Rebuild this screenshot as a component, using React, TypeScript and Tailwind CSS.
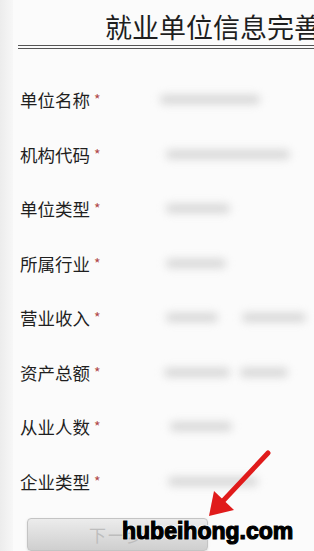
import React from 'react'

const fields: { label: string; bars: [number, number][] }[] = [
  { label: '单位名称', bars: [[0, 100]] },
  { label: '机构代码', bars: [[6, 124]] },
  { label: '单位类型', bars: [[6, 64]] },
  { label: '所属行业', bars: [[6, 60]] },
  { label: '营业收入', bars: [[6, 52], [82, 64]] },
  { label: '资产总额', bars: [[4, 66], [80, 48]] },
  { label: '从业人数', bars: [[10, 62]] },
  { label: '企业类型', bars: [[8, 90]] },
]

const cjk = { fontFamily: '"Noto Sans CJK SC", "Noto Sans", sans-serif' }

export default function App() {
  return (
    <div className="relative flex h-[551px] w-[314px] overflow-hidden bg-[#fbfbfb]" style={cjk}>
      <div className="w-[13px] shrink-0 bg-gradient-to-r from-[#ececec] to-[#f7f7f7]" />
      <div className="flex min-w-0 flex-1 flex-col">
        <div className="whitespace-nowrap pl-[92px] pt-[10px] text-[27px] leading-[34px] text-[#1e1e1e]">
          就业单位信息完善
        </div>
        <div className="ml-[5px] mt-[1px] h-[4px] border-y border-[#555]" />

        <div className="mt-[24px] flex flex-col">
          {fields.map((f) => (
            <div key={f.label} className="flex h-[54.5px] items-center">
              <div className="flex w-[140px] shrink-0 items-start pl-[7px] text-[17.5px] leading-[24px] text-[#1f1f1f]">
                {f.label}
                <span className="ml-[4px] mt-[-1px] text-[14px] text-[#b04848]">*</span>
              </div>
              <div className="relative h-[10px] flex-1">
                {f.bars.map(([x, w], i) => (
                  <div
                    key={i}
                    className="absolute top-0 h-[9px] rounded-full bg-[#d6d6d6] blur-[4px]"
                    style={{ left: x + 7, width: w }}
                  />
                ))}
              </div>
            </div>
          ))}
        </div>

        <div className="ml-[14px] mt-[9px] flex h-[36px] w-[181px] items-center justify-center rounded-[4px] border border-[#c4c4c4] bg-gradient-to-b from-[#ececec] to-[#cfcfcf] shadow-sm">
          <span className="text-[17px] tracking-[2px] text-[#bdbdbd]">下一步</span>
        </div>
      </div>

      <div
        className="absolute left-[122px] top-[516px] text-[23px] font-bold leading-[30px] text-black"
        style={{
          fontFamily: '"Liberation Sans", Arial, sans-serif',
          WebkitTextStroke: '1.2px #000',
          textShadow: '0 0 2px #fff, 1px 1px 0 #fff, -1px -1px 0 #fff, 1px -1px 0 #fff, -1px 1px 0 #fff',
        }}
      >
        hubeihong.com
      </div>

      <svg className="absolute left-0 top-0" width="314" height="551" viewBox="0 0 314 551">
        <line x1="268" y1="453" x2="222" y2="502" stroke="#e01b1b" strokeWidth="5" strokeLinecap="round" />
        <polygon points="209,516 214,491 234,510" fill="#e01b1b" />
      </svg>
    </div>
  )
}
